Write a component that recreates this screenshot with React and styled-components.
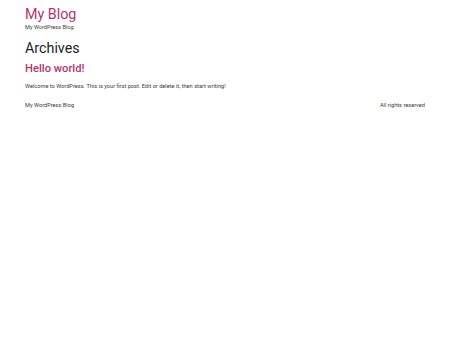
import React from "react";
import styled, { createGlobalStyle } from "styled-components";

const Global = createGlobalStyle`
  html, body { margin: 0; padding: 0; background: #fff; }
  body { font-family: Roboto, "Noto Sans", sans-serif; color: #222; }
`;

const Page = styled.div`
  padding: 5px 25px 0;
  display: flex;
  flex-direction: column;
`;

const Header = styled.header`
  display: flex;
  flex-direction: column;
`;

const SiteTitle = styled.a`
  font-size: 14.3px;
  line-height: 18px;
  color: #b5346d;
  text-decoration: none;
  font-weight: 400;
`;

const Tagline = styled.p`
  margin: 1px 0 0;
  font-size: 5.6px;
  line-height: 7px;
  color: #3a3a3a;
`;

const Main = styled.main`
  display: flex;
  flex-direction: column;
`;

const PageTitle = styled.h1`
  margin: 8px 0 0;
  font-size: 14.3px;
  line-height: 18px;
  font-weight: 400;
  color: #222;
`;

const PostTitle = styled.h2`
  margin: 5px 0 0;
  font-size: 11.2px;
  line-height: 14px;
  font-weight: 500;
  color: #b5346d;
`;

const Excerpt = styled.p`
  margin: 7px 0 0;
  font-size: 5.65px;
  line-height: 7px;
  color: #3a3a3a;
`;

const Footer = styled.footer`
  margin-top: 12px;
  display: flex;
  justify-content: space-between;
  font-size: 5.65px;
  line-height: 7px;
  color: #3a3a3a;
`;

export default function App() {
  return (
    <>
      <Global />
      <Page>
        <Header>
          <SiteTitle href="#">My Blog</SiteTitle>
          <Tagline>My WordPress Blog</Tagline>
        </Header>
        <Main>
          <PageTitle>Archives</PageTitle>
          <PostTitle>Hello world!</PostTitle>
          <Excerpt>Welcome to WordPress. This is your first post. Edit or delete it, then start writing!</Excerpt>
        </Main>
        <Footer>
          <span>My WordPress Blog</span>
          <span>All rights reserved</span>
        </Footer>
      </Page>
    </>
  );
}
